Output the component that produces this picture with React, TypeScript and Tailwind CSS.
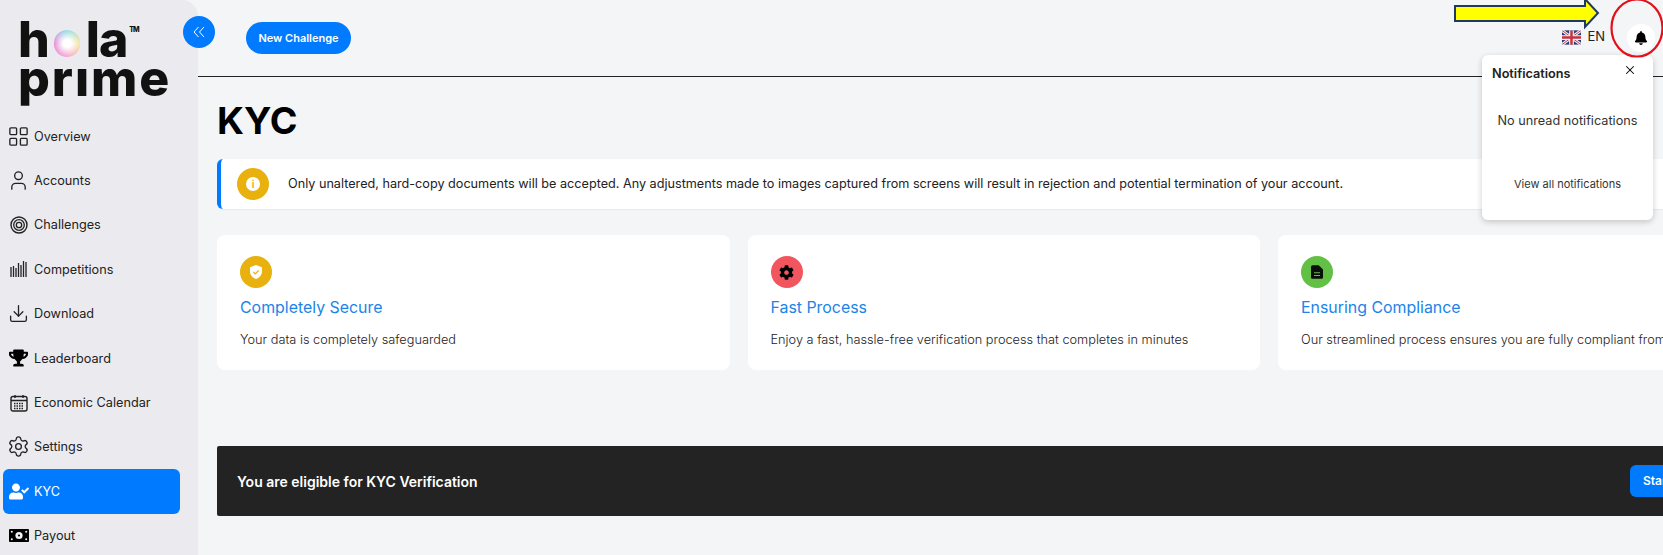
import type { ReactNode } from 'react';
import { FaBell, FaCog, FaTrophy, FaUserCheck } from 'react-icons/fa';
import { Download, LayoutGrid, Settings, User, X } from 'lucide-react';

function TargetIcon() {
  return (
    <svg viewBox="0 0 18 18" className="h-[18px] w-[18px] shrink-0" fill="none" stroke="currentColor">
      <circle cx="9" cy="9" r="8" strokeWidth="1.4" />
      <circle cx="9" cy="9" r="5.3" strokeWidth="1.3" />
      <circle cx="9" cy="9" r="2.7" strokeWidth="1.3" />
    </svg>
  );
}

function BarsIcon() {
  return (
    <svg viewBox="0 0 18 18" className="h-[18px] w-[18px] shrink-0" stroke="currentColor" strokeWidth="1.3">
      <path d="M1 17V7M3.5 17V6M6 17V8M8.5 17V3M11 17V5M13.5 17V1M16 17V2" />
    </svg>
  );
}

function CalendarIcon() {
  return (
    <svg viewBox="0 0 18 18" className="h-[18px] w-[18px] shrink-0" fill="none" stroke="currentColor">
      <rect x="1" y="2.5" width="16" height="14.5" rx="2" strokeWidth="1.4" />
      <path d="M1 6.5h16M5 1v3M13 1v3" strokeWidth="1.4" />
      <path d="M4 9.5h10M4 12h10M4 14.5h10" strokeWidth="1.3" strokeDasharray="1.5 1" />
    </svg>
  );
}

function MoneyIcon() {
  return (
    <svg viewBox="0 0 20 13" className="h-[13px] w-[20px] shrink-0">
      <rect x="0" y="0" width="20" height="13" rx="1" fill="#000" />
      <circle cx="10" cy="6.5" r="3.6" fill="#f4f4f6" />
      <circle cx="10" cy="6.5" r="1.1" fill="#000" />
      <circle cx="2.8" cy="2.8" r="1" fill="#f4f4f6" />
      <circle cx="17.2" cy="2.8" r="1" fill="#f4f4f6" />
      <circle cx="2.8" cy="10.2" r="1" fill="#f4f4f6" />
      <circle cx="17.2" cy="10.2" r="1" fill="#f4f4f6" />
    </svg>
  );
}

function UkFlag() {
  return (
    <svg viewBox="0 0 20 15" className="h-[15px] w-[19px] rounded-[2px]">
      <rect width="20" height="15" fill="#25407f" />
      <path d="M0 0l20 15M20 0L0 15" stroke="#f2f2f2" strokeWidth="3" />
      <path d="M0 0l20 15M20 0L0 15" stroke="#c8313e" strokeWidth="1" />
      <path d="M10 0v15M0 7.5h20" stroke="#f2f2f2" strokeWidth="5" />
      <path d="M10 0v15M0 7.5h20" stroke="#c8313e" strokeWidth="2.6" />
    </svg>
  );
}

function ShieldCheck() {
  return (
    <svg viewBox="0 0 16 16" className="h-[16px] w-[16px]">
      <path d="M8 1l6 2.2v4.3c0 3.5-2.5 6.2-6 7.5-3.5-1.3-6-4-6-7.5V3.2z" fill="#fff" />
      <path d="M5.4 8l1.9 1.9 3.3-3.4" fill="none" stroke="#e8b10e" strokeWidth="1.2" />
    </svg>
  );
}

function DocIcon() {
  return (
    <svg viewBox="0 0 14 16" className="h-[14px] w-[12px]">
      <path d="M2 0h7l5 5v9a2 2 0 01-2 2H2a2 2 0 01-2-2V2a2 2 0 012-2z" fill="#0b0f0b" />
      <path d="M3.5 9h7M3.5 12h7" stroke="#62c044" strokeWidth="1.2" />
    </svg>
  );
}

const navItems: { label: string; icon: ReactNode; active?: boolean }[] = [
  { label: 'Overview', icon: <LayoutGrid className="h-[23px] w-[23px] shrink-0" strokeWidth={1.4} /> },
  { label: 'Accounts', icon: <User className="h-[23px] w-[23px] shrink-0" strokeWidth={1.4} /> },
  { label: 'Challenges', icon: <TargetIcon /> },
  { label: 'Competitions', icon: <BarsIcon /> },
  { label: 'Download', icon: <Download className="h-[21px] w-[21px] shrink-0" strokeWidth={1.5} /> },
  { label: 'Leaderboard', icon: <FaTrophy className="h-[18px] w-[19px] shrink-0 text-black" /> },
  { label: 'Economic Calendar', icon: <CalendarIcon /> },
  { label: 'Settings', icon: <Settings className="h-[23px] w-[23px] shrink-0" strokeWidth={1.4} /> },
  { label: 'KYC', icon: <FaUserCheck className="h-[17px] w-[20px] shrink-0" />, active: true },
  { label: 'Payout', icon: <MoneyIcon /> },
];

const features = [
  {
    title: 'Completely Secure',
    text: 'Your data is completely safeguarded',
    color: 'bg-[#e8b10e]',
    icon: <ShieldCheck />,
  },
  {
    title: 'Fast Process',
    text: 'Enjoy a fast, hassle-free verification process that completes in minutes',
    color: 'bg-[#f1555d]',
    icon: <FaCog className="h-[15px] w-[15px] text-black" />,
  },
  {
    title: 'Ensuring Compliance',
    text: 'Our streamlined process ensures you are fully compliant from start to finish',
    color: 'bg-[#62c044]',
    icon: <DocIcon />,
  },
];

export default function App() {
  return (
    <div className="relative flex h-[555px] w-[1663px] overflow-hidden bg-[#f4f5f7] font-['Inter',sans-serif] text-[#222]">
      <aside className="w-[198px] shrink-0 rounded-tr-2xl bg-[#ebebef]">
        <div className="h-[114px] pl-[18px] pt-[18px] font-extrabold text-[#111]">
          <div className="flex h-[42px] items-end text-[50px] leading-[42px] tracking-[-1px]">
            <span>h</span>
            <span className="mb-[3px] ml-[5px] mr-[6px] h-[27px] w-[26px] shrink-0 rounded-full bg-[radial-gradient(circle,#fff_20%,transparent_68%),conic-gradient(#9adfe8,#f5e6a0,#f7a8d8,#e88fd8,#9adfe8)]" />
            <span>la</span>
            <span className="mb-[26px] ml-[2px] text-[7px] leading-[8px]">TM</span>
          </div>
          <div className="text-[50px] leading-[36px] tracking-[1.9px]">prıme</div>
        </div>
        <nav>
          {navItems.map((item) => (
            <div
              key={item.label}
              className={`ml-[3px] flex w-[177px] items-center gap-[6px] rounded-md pl-[6px] text-[12.7px] ${
                item.active ? '-my-[0.3px] h-[45px] bg-[#007bff] text-white' : 'h-[44.4px] text-[#222]'
              }`}
            >
              <span className="flex w-[19px] shrink-0 items-center justify-center">{item.icon}</span>
              <span>{item.label}</span>
            </div>
          ))}
        </nav>
      </aside>

      <main className="min-w-0 flex-1">
        <header className="flex h-[77px] items-start justify-between border-b border-[#222] pl-[48px] pr-[8px] pt-[22px]">
          <button className="h-[32px] w-[105px] rounded-full bg-[#007bff] text-[11px] font-semibold text-white">
            New Challenge
          </button>
          <div className="flex items-center">
            <UkFlag />
            <span className="ml-[6px] text-[13px]">EN</span>
            <span className="ml-[22px] mt-[2px] flex h-[28px] w-[28px] items-center justify-center rounded-full bg-white">
              <FaBell className="h-[14px] w-[14px] text-black" />
            </span>
          </div>
        </header>

        <section className="w-[1591px] pl-[19px]">
          <h1 className="mt-[21px] text-[37.5px] font-bold leading-[46px] text-black">KYC</h1>
          <div className="mt-[15px] flex h-[50px] items-center rounded-l-md border-l-4 border-[#007bff] bg-white pl-[16px] shadow-[0_1px_1px_rgba(0,0,0,0.05)]">
            <span className="flex h-[32px] w-[32px] items-center justify-center rounded-full bg-[#e8b10e]">
              <span className="flex h-[14px] w-[14px] items-center justify-center rounded-full bg-white text-[10px] font-bold leading-none text-[#e8b10e]">
                i
              </span>
            </span>
            <p className="ml-[19px] text-[12.65px] text-[#222]">
              Only unaltered, hard-copy documents will be accepted. Any adjustments made to images captured from screens will result in rejection and potential termination of your account.
            </p>
          </div>

          <div className="mt-[26px] flex gap-[18px]">
            {features.map((card) => (
              <div key={card.title} className="h-[135px] w-[512.5px] shrink-0 rounded-lg bg-white px-[23px] pt-[21px]">
                <span className={`flex h-[32px] w-[32px] items-center justify-center rounded-full ${card.color}`}>
                  {card.icon}
                </span>
                <h3 className="mt-[10px] text-[15.9px] leading-[20px] text-[#1b84e8]">{card.title}</h3>
                <p className="mt-[13px] text-[12.75px] font-light leading-[18px] text-[#222]">{card.text}</p>
              </div>
            ))}
          </div>

          <div className="mt-[76px] flex h-[70px] items-center justify-between rounded-[2px] bg-[#232323] pl-[20px] pr-[19px]">
            <span className="text-[14px] font-semibold text-white">You are eligible for KYC Verification</span>
            <button className="h-[32px] w-[140px] rounded-md bg-[#007bff] pl-[13px] text-left text-[12px] font-semibold text-white">
              Start Verification
            </button>
          </div>
        </section>
      </main>

      {/* sidebar collapse toggle */}
      <button className="absolute left-[183px] top-[16px] flex h-[32px] w-[32px] items-center justify-center rounded-full bg-[#007bff] text-white">
        <svg viewBox="0 0 12 12" className="h-[12px] w-[12px]" fill="none" stroke="currentColor" strokeWidth="1">
          <path d="M5.5 1L1 6l4.5 5M11 1L6.5 6l4.5 5" />
        </svg>
      </button>

      {/* notifications popover */}
      <div className="absolute left-[1482px] top-[55px] h-[165px] w-[171px] rounded-md bg-white shadow-[0_2px_6px_rgba(0,0,0,0.2)]">
        <div className="flex items-start justify-between pl-[10px] pr-[16px] pt-[10px]">
          <span className="text-[12.7px] font-semibold leading-[18px]">Notifications</span>
          <X className="mt-[-2px] h-[14px] w-[14px] text-black" strokeWidth={1.8} />
        </div>
        <p className="mt-[29px] text-center text-[12.7px] leading-[18px] text-[#333]">No unread notifications</p>
        <p className="mt-[46px] text-center text-[11px] leading-[16px] text-[#333]">View all notifications</p>
      </div>

      {/* annotation: arrow + red ring drawn on top of the screenshot */}
      <svg className="pointer-events-none absolute left-[1450px] top-0 h-[60px] w-[213px]" viewBox="0 0 213 60" fill="none">
        <path d="M5 6H135V-1L148 13L135 27V21H5Z" fill="#ffff00" stroke="#1f3864" strokeWidth="2" />
        <ellipse cx="187" cy="28" rx="25.5" ry="28.5" stroke="#e3101a" strokeWidth="2.2" />
      </svg>
    </div>
  );
}
